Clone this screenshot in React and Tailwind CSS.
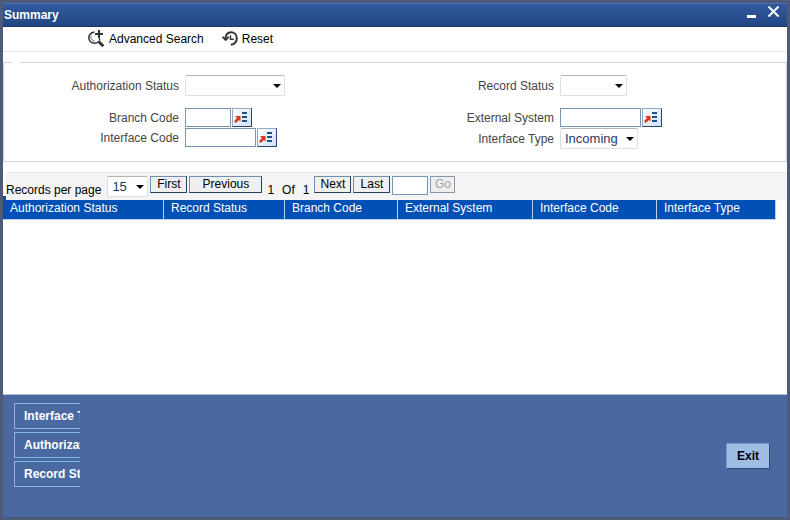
import React, { useState } from 'react'

const columns = [
    { name: 'Authorization Status', width: 'w-[161px]' },
    { name: 'Record Status', width: 'w-[121px]' },
    { name: 'Branch Code', width: 'w-[113px]' },
    { name: 'External System', width: 'w-[135px]' },
    { name: 'Interface Code', width: 'w-[124px]' },
    { name: 'Interface Type', width: 'w-[119px]' },
]

const tabs = ['Interface Type', 'Authorization Status', 'Record Status']

const SearchIcon = () => (
    <svg width="17" height="18" viewBox="0 0 17 18" fill="none" stroke="#333" aria-hidden="true">
        <path d="M6.500 2C3 2.600 0.800 4.800 0.800 8c0 3 2.500 5.300 5.700 5.300 1.500 0 2.900-.500 4-1.300" strokeWidth="1.500" />
        <path d="M3 5.500C2.400 8.500 4 11 7 11.500" stroke="#999" strokeWidth="1.300" />
        <path d="M11 0v8M7 4h8" strokeWidth="2" />
        <path d="M11.500 8v2.500" strokeWidth="1.300" />
        <path d="M10.300 11.300l5 5" strokeWidth="2.800" />
    </svg>
)

const ResetIcon = () => (
    <svg width="16" height="16" viewBox="0 0 16 16" fill="none" stroke="#333" aria-hidden="true">
        <path d="M3.500 8.500C3.300 4 5.500 1.300 9 1.300c3.300 0 5.800 2.500 5.800 5.900 0 3.600-2.500 6-6 6.500" strokeWidth="2" />
        <path d="M0.600 5.800l3 3.200 3.200-3.200" strokeWidth="1.800" />
        <path d="M8.500 4.300v4h3.300" strokeWidth="1.400" />
    </svg>
)

const Select = ({ id, width, options = [''] }) => (
    <span className={`relative inline-flex ${width}`}>
        <select id={id} className="h-[21px] w-full appearance-none rounded-xs border border-[#dcdfe3] border-t-[#b4b4b4] bg-white pl-1 text-[13px] text-[#1f3864]">
            {options.map((o) => <option key={o}>{o}</option>)}
        </select>
        <svg className="pointer-events-none absolute right-1 top-[9px]" width="8" height="4" viewBox="0 0 8 4" aria-hidden="true">
            <path d="M0 0h8L4 4z" fill="#000" />
        </svg>
    </span>
)

const LovInput = ({ id, width }) => (
    <span className="flex gap-px">
        <input id={id} type="text" className={`h-[19px] border border-[#7695b4] bg-white px-1 text-xs ${width}`} />
        <button type="button" aria-label="List of values" className="h-[19px] w-5 border border-[#8fa9c6] border-r-[#27466f] border-b-[#27466f] bg-linear-to-br from-white to-[#cfe0f4]">
            <svg width="18" height="17" viewBox="0 0 18 17" aria-hidden="true">
                <path d="M2 7h5.500v5.500L5.900 10.900 2.800 14 1 12.200 4 9z" fill="#d8371b" />
                <path d="M9 4h5M9 8h5M9 12h5" stroke="#1c5286" strokeWidth="2" />
            </svg>
        </button>
    </span>
)

const Field = ({ id, label, labelWidth, children }) => (
    <div className="flex items-center gap-[6px]">
        <label htmlFor={id} className={`text-right text-[#444] ${labelWidth}`}>{label}</label>
        {children}
    </div>
)

const PagerButton = ({ children, width, disabled }) => (
    <button type="button" disabled={disabled} className={`h-[17px] border border-[#6f8fae] border-r-[#27405f] border-b-[#27405f] bg-[#efefef] leading-[15px] disabled:border-[#8798aa] disabled:text-[#a3a3a3] ${width}`}>
        {children}
    </button>
)

const App = () => {
    const [page, setPage] = useState('')

    return (
        <div className="flex min-h-screen flex-col border-3 border-[#4f5a7a] bg-white font-['Liberation_Sans',Arial,sans-serif] text-xs text-black">
            <header className="flex h-6 shrink-0 items-center justify-between border-t border-b border-t-[#4a72b0] border-b-[#1d3767] bg-linear-to-b from-[#30599c] to-[#234784] pr-2 pl-px text-white">
                <h1 className="font-bold">Summary</h1>
                <div className="flex items-center gap-3">
                    <button type="button" aria-label="Minimize">
                        <svg width="9" height="12" viewBox="0 0 9 12"><path d="M0 7.500h9" stroke="#fff" strokeWidth="3" /></svg>
                    </button>
                    <button type="button" aria-label="Close" className="pb-2">
                        <svg width="11" height="11" viewBox="0 0 11 11"><path d="M0.500 0.500l10 10M10.500 0.500l-10 10" stroke="#fff" strokeWidth="2" /></svg>
                    </button>
                </div>
            </header>

            <div className="flex h-[25px] shrink-0 items-center gap-[18px] border-b border-[#e6e6e6] pl-[85px]">
                <button type="button" className="flex items-center gap-1"><SearchIcon />Advanced Search</button>
                <button type="button" className="flex items-center gap-1"><ResetIcon />Reset</button>
            </div>

            <form onSubmit={(e) => e.preventDefault()}>
                <fieldset className="mt-[10px] border border-[#c5d5e2] pb-3">
                    <legend className="ml-2 h-px w-2" aria-hidden="true"></legend>
                    <div className="grid grid-cols-2 pt-3">
                        <div>
                            <Field id="authStatus" label="Authorization Status" labelWidth="w-[175px]">
                                <Select id="authStatus" width="w-[100px]" />
                            </Field>
                            <div className="mt-3 flex flex-col gap-px">
                                <Field id="branchCode" label="Branch Code" labelWidth="w-[175px]">
                                    <LovInput id="branchCode" width="w-[46px]" />
                                </Field>
                                <Field id="interfaceCode" label="Interface Code" labelWidth="w-[175px]">
                                    <LovInput id="interfaceCode" width="w-[71px]" />
                                </Field>
                            </div>
                        </div>
                        <div>
                            <Field id="recordStatus" label="Record Status" labelWidth="w-[159px]">
                                <Select id="recordStatus" width="w-[67px]" />
                            </Field>
                            <div className="mt-3 flex flex-col gap-px">
                                <Field id="externalSystem" label="External System" labelWidth="w-[159px]">
                                    <LovInput id="externalSystem" width="w-[81px]" />
                                </Field>
                                <Field id="interfaceType" label="Interface Type" labelWidth="w-[159px]">
                                    <Select id="interfaceType" width="w-[78px]" options={['Incoming', 'Outgoing']} />
                                </Field>
                            </div>
                        </div>
                    </div>
                </fieldset>
            </form>

            {/* sits over the top edge of the table header */}
            <div className="relative z-10 mt-[10px] ml-[3px] flex h-7 shrink-0 items-start gap-[2px] border-t border-[#e8e8e8] bg-[#f4f4f4] pt-[3px]">
                <label htmlFor="pageSize" className="mr-1 pt-[6px]">Records per page</label>
                <Select id="pageSize" width="w-[41px]" options={['15', '30', '50']} />
                <PagerButton width="w-[37px]">First</PagerButton>
                <PagerButton width="w-[73px]">Previous</PagerButton>
                <span className="flex gap-2 px-[3px] pt-[6px]"><span>1</span><span>Of</span><span>1</span></span>
                <PagerButton width="w-[37px]">Next</PagerButton>
                <PagerButton width="w-[37px]">Last</PagerButton>
                <input type="text" aria-label="Page" value={page} onChange={(e) => setPage(e.target.value)} className="h-[19px] w-9 border border-[#7695b4] bg-white px-1" />
                <PagerButton width="w-[25px]" disabled>Go</PagerButton>
            </div>

            <div className="-mt-1 mr-[11px] flex-1">
                <table className="w-full table-fixed border-separate border-spacing-0">
                    <thead>
                        <tr className="h-6 bg-[#0150b5] text-left text-white">
                            {columns.map((col) => (
                                <th key={col.name} scope="col" className={`border-r border-b border-[#b9d0ec] pt-1 pl-[7px] align-top font-normal ${col.width}`}>{col.name}</th>
                            ))}
                        </tr>
                    </thead>
                    <tbody></tbody>
                </table>
            </div>

            <footer className="flex h-[123px] shrink-0 items-start justify-between border-t border-[#a9c3e0] bg-[#4a69a1] pt-2 pr-[17px] pl-[11px]">
                <nav className="flex w-[66px] flex-col gap-[3px] overflow-hidden">
                    {tabs.map((tab) => (
                        <a key={tab} href="#" className="h-[26px] w-40 border border-[#86b8f0] pl-[9px] leading-6 font-bold whitespace-nowrap text-white">{tab}</a>
                    ))}
                </nav>
                <button type="button" className="mt-10 h-[26px] w-11 border border-[#7298c8] border-r-[#2f4a73] border-b-[#2f4a73] bg-[#a0bde4] font-bold">Exit</button>
            </footer>
        </div>
    )
}

export default App
